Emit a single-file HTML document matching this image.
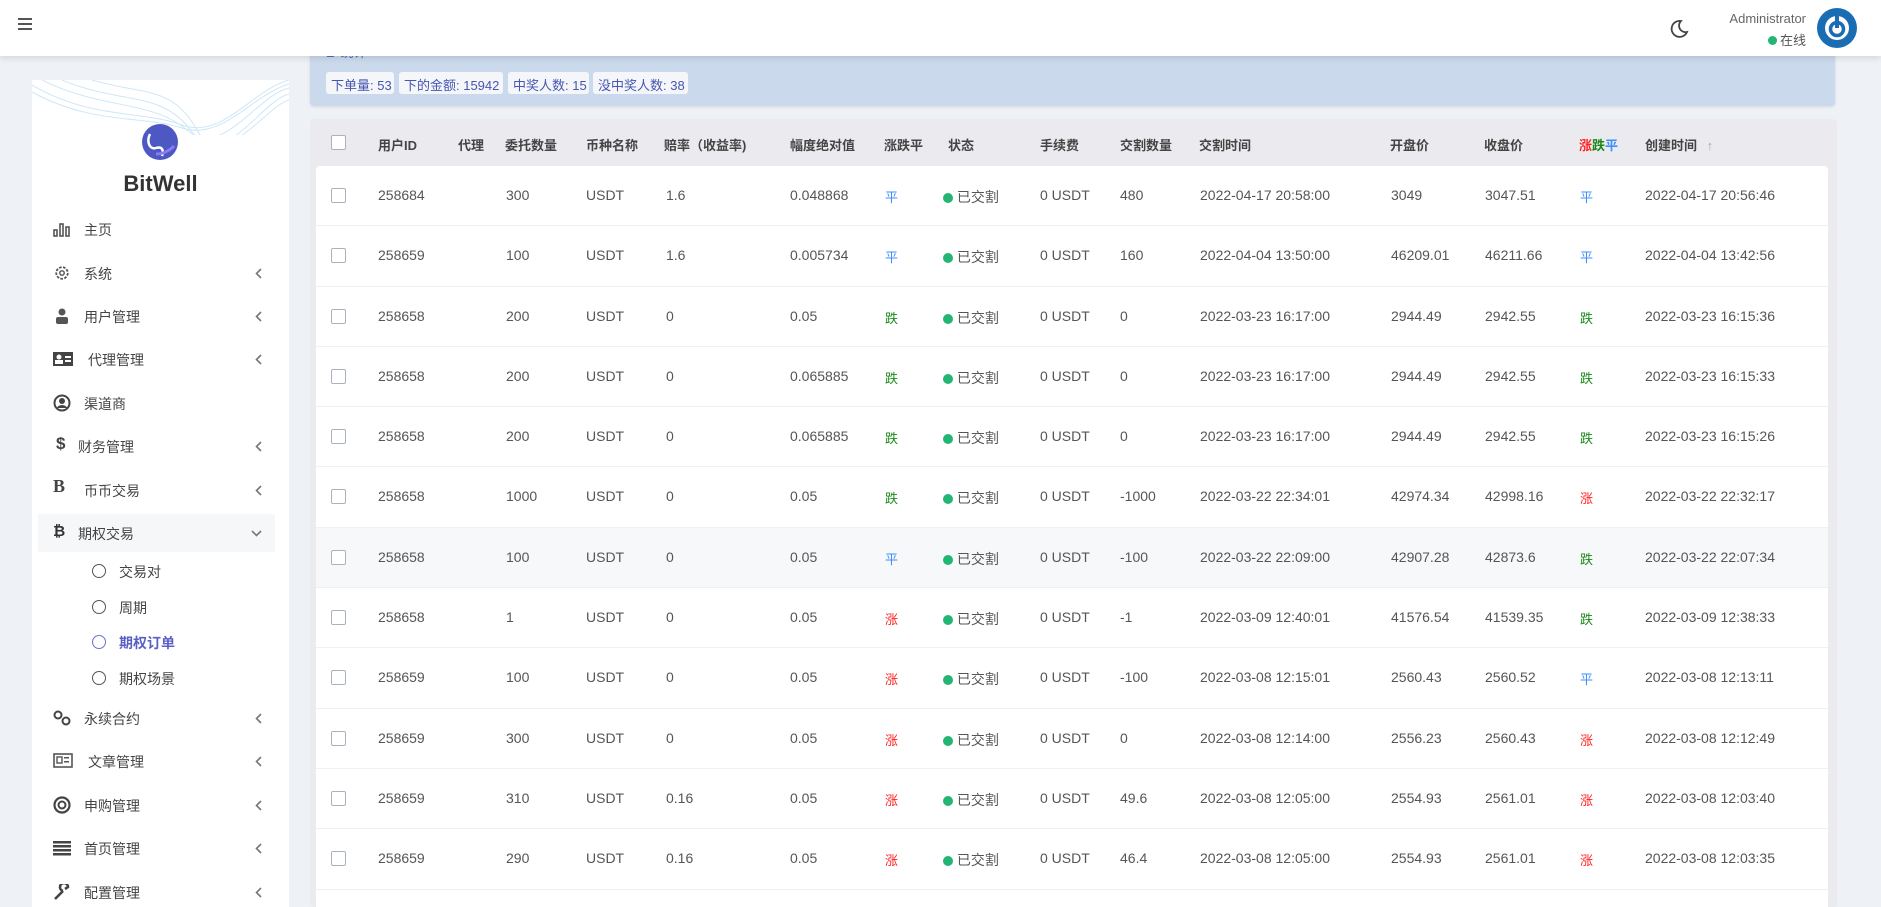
<!DOCTYPE html>
<html style="overflow:hidden;height:907px"><head><meta charset="utf-8">
<style>
*{box-sizing:border-box;margin:0;padding:0}
html,body{overflow:hidden}
body{width:1881px;height:907px;background:#eef1f6;font-family:"Liberation Sans","Noto Sans CJK SC",sans-serif;color:#555;position:relative}
#wrap{position:absolute;left:0;top:0;width:1881px;height:907px;overflow:hidden}
.hdr{position:absolute;left:0;top:0;width:1881px;height:56px;background:#fff;box-shadow:0 2px 6px rgba(0,0,0,.12);z-index:5}
.side{position:absolute;left:32px;top:80px;width:257px;height:827px;background:#fff}
.mi{position:absolute;left:0;width:257px;height:40px;font-size:14px;color:#444}
.mi .ic{position:absolute;left:21px;top:12px;width:18px;height:16px}
.mi .tx{position:absolute;left:52px;top:11px}
.mi .ch{position:absolute;left:223px;top:15px;width:7px;height:11px}
.sub{position:absolute;left:0;width:257px;height:34px;font-size:14px;color:#444}
.sub .c{position:absolute;left:60px;top:10px;width:14px;height:14px;border:1.5px solid #555;border-radius:50%}
.sub .tx{position:absolute;left:87px;top:8px}
.stats{position:absolute;left:310px;top:40px;width:1525px;height:66px;background:#cbd9ec;border-radius:0 0 4px 4px;box-shadow:0 1px 3px rgba(0,0,0,.1)}
.badge{position:absolute;top:32px;height:22px;background:#f4f6fa;border-radius:3px;font-size:13px;color:#4656b0;padding:3px 5px;white-space:nowrap}
.card{position:absolute;left:310px;top:119px;width:1527px;height:788px;background:#ebebef;border-radius:4px;overflow:hidden}
.th{position:absolute;top:0;left:0;height:46px;width:100%;font-size:13px;font-weight:bold;color:#444}
.th span,.row span{position:absolute;top:16px;white-space:nowrap}
.rows{position:absolute;left:6px;top:47px;width:1512px;background:#fff;border-radius:4px}
.row{position:relative;height:60.3px;border-bottom:1px solid #eef0f3;font-size:14px;color:#555}
.row span{top:21px}
.cb{position:absolute;width:15px;height:15px;border:1.5px solid #aab2bd;border-radius:2px;background:#fff}
.dot{display:inline-block;width:10px;height:10px;background:#22b573;border-radius:50%}
.p{color:#3d8eff}.d{color:#1b8a1b}.z{color:#f22}
</style></head><body><div id="wrap">
<div class="hdr">
 <div style="position:absolute;left:18px;top:18px;width:14px;height:2px;background:#555;box-shadow:0 5px 0 #555,0 10px 0 #555"></div>
 <svg style="position:absolute;left:1669px;top:19px" width="20" height="20" viewBox="0 0 20 20"><path d="M12 2A8 8 0 1 0 18 13A6.5 6.5 0 0 1 12 2Z" fill="none" stroke="#444" stroke-width="1.8"/></svg>
 <div style="position:absolute;right:75px;top:11px;font-size:13px;color:#666">Administrator</div>
 <div style="position:absolute;right:75px;top:30px;font-size:13px;color:#555"><span class="dot" style="width:9px;height:9px;margin-right:3px"></span>在线</div>
 <svg style="position:absolute;left:1817px;top:8px" width="40" height="40" viewBox="0 0 40 40"><circle cx="20" cy="20" r="20" fill="#1b6db3"/><circle cx="20" cy="20" r="12" fill="#fff"/><circle cx="20" cy="21" r="6.5" fill="none" stroke="#1b6db3" stroke-width="3.5"/><rect x="18" y="8" width="4" height="12" fill="#1b6db3"/></svg>
</div>

<div class="side">
 <svg style="position:absolute;left:0;top:0" width="257" height="55" viewBox="0 0 257 55"><g fill="none" stroke="#cfe7f8" stroke-width="1"><path d="M0 5C60 40 110 30 150 45S220 10 257 0"/><path d="M10 0C70 30 120 20 155 50S225 15 257 8"/><path d="M30 0C90 25 130 10 160 52S230 20 257 14"/><path d="M60 0C110 15 140 5 165 50S235 25 257 20"/><path d="M0 12C60 45 110 35 150 48S220 15 257 4"/></g></svg>
 <svg style="position:absolute;left:110px;top:44px" width="36" height="36" viewBox="0 0 36 36"><circle cx="18" cy="18" r="18" fill="#4e58c2"/><path d="M8 10C4 18 8 26 14 24C20 22 22 26 20 32" fill="none" stroke="#fff" stroke-width="2.5"/><path d="M14 30C22 30 28 26 32 22" fill="none" stroke="#8b7cf2" stroke-width="3"/></svg>
 <div style="position:absolute;left:0;width:257px;top:91px;text-align:center;font-size:22px;font-weight:bold;color:#333">BitWell</div>

 <div class="mi" style="top:129px"><svg class="ic" viewBox="0 0 18 16"><g fill="none" stroke="#555" stroke-width="1.6"><rect x="1" y="9" width="3" height="6"/><rect x="7" y="3" width="3" height="12"/><rect x="13" y="6" width="3" height="9"/></g></svg><span class="tx">主页</span></div>
 <div class="mi" style="top:173px"><svg class="ic" viewBox="0 0 18 18"><circle cx="9" cy="9" r="6.5" fill="none" stroke="#555" stroke-width="2" stroke-dasharray="3 1.5"/><circle cx="9" cy="9" r="2.5" fill="none" stroke="#555" stroke-width="1.6"/></svg><span class="tx">系统</span><svg class="ch" viewBox="0 0 7 11"><path d="M6 1L1.5 5.5L6 10" fill="none" stroke="#777" stroke-width="1.6"/></svg></div>
 <div class="mi" style="top:216px"><svg class="ic" viewBox="0 0 18 16"><circle cx="9" cy="4" r="3.5" fill="#555"/><rect x="3" y="9" width="12" height="7" rx="2" fill="#555"/></svg><span class="tx" style="left:52px">用户管理</span><svg class="ch" viewBox="0 0 7 11"><path d="M6 1L1.5 5.5L6 10" fill="none" stroke="#777" stroke-width="1.6"/></svg></div>
 <div class="mi" style="top:259px"><svg class="ic" viewBox="0 0 20 16" style="width:20px"><rect x="0" y="1" width="20" height="14" fill="#444"/><circle cx="6" cy="6" r="2.5" fill="#fff"/><rect x="2" y="9" width="8" height="4" fill="#fff"/><rect x="12" y="5" width="6" height="2" fill="#fff"/><rect x="12" y="9" width="6" height="2" fill="#fff"/></svg><span class="tx" style="left:56px">代理管理</span><svg class="ch" viewBox="0 0 7 11"><path d="M6 1L1.5 5.5L6 10" fill="none" stroke="#777" stroke-width="1.6"/></svg></div>
 <div class="mi" style="top:303px"><svg class="ic" viewBox="0 0 18 18" style="height:18px;top:11px"><circle cx="9" cy="9" r="7.5" fill="none" stroke="#444" stroke-width="2"/><circle cx="9" cy="7" r="3" fill="#444"/><path d="M3.5 14C6 10 12 10 14.5 14" fill="#444"/></svg><span class="tx">渠道商</span></div>
 <div class="mi" style="top:346px"><span style="position:absolute;left:24px;top:8px;font-weight:bold;font-size:17px;color:#444">$</span><span class="tx" style="left:46px">财务管理</span><svg class="ch" viewBox="0 0 7 11"><path d="M6 1L1.5 5.5L6 10" fill="none" stroke="#777" stroke-width="1.6"/></svg></div>
 <div class="mi" style="top:390px"><span style="position:absolute;left:21px;top:6px;font-weight:bold;font-size:18px;color:#444;font-family:'Liberation Serif',serif">B</span><span class="tx">币币交易</span><svg class="ch" viewBox="0 0 7 11"><path d="M6 1L1.5 5.5L6 10" fill="none" stroke="#777" stroke-width="1.6"/></svg></div>
 <div class="mi" style="top:434px;left:6px;width:237px;height:38px;background:#f6f7f9"><span style="position:absolute;left:15px;top:9px;font-weight:bold;font-size:15px;color:#333">₿</span><span class="tx" style="left:40px;top:10px">期权交易</span><svg style="position:absolute;left:213px;top:16px" width="11" height="7" viewBox="0 0 11 7"><path d="M1 1L5.5 5.5L10 1" fill="none" stroke="#777" stroke-width="1.6"/></svg></div>
 <div class="sub" style="top:474px"><span class="c"></span><span class="tx">交易对</span></div>
 <div class="sub" style="top:510px"><span class="c"></span><span class="tx">周期</span></div>
 <div class="sub" style="top:545px"><span class="c" style="border-color:#6a70d4"></span><span class="tx" style="color:#5a5fc8;font-weight:bold">期权订单</span></div>
 <div class="sub" style="top:581px"><span class="c"></span><span class="tx">期权场景</span></div>
 <div class="mi" style="top:618px"><svg class="ic" viewBox="0 0 18 16"><circle cx="5" cy="5" r="3.5" fill="none" stroke="#444" stroke-width="2"/><circle cx="13" cy="11" r="3.5" fill="none" stroke="#444" stroke-width="2"/></svg><span class="tx">永续合约</span><svg class="ch" viewBox="0 0 7 11"><path d="M6 1L1.5 5.5L6 10" fill="none" stroke="#777" stroke-width="1.6"/></svg></div>
 <div class="mi" style="top:661px"><svg class="ic" viewBox="0 0 20 16" style="width:20px"><rect x="1" y="1" width="18" height="13" fill="none" stroke="#555" stroke-width="1.6"/><rect x="4" y="4" width="5" height="6" fill="none" stroke="#555" stroke-width="1.4"/><rect x="11" y="4" width="5" height="1.5" fill="#555"/><rect x="11" y="8" width="5" height="1.5" fill="#555"/></svg><span class="tx" style="left:56px">文章管理</span><svg class="ch" viewBox="0 0 7 11"><path d="M6 1L1.5 5.5L6 10" fill="none" stroke="#777" stroke-width="1.6"/></svg></div>
 <div class="mi" style="top:705px"><svg class="ic" viewBox="0 0 18 18" style="height:18px;top:11px"><circle cx="9" cy="9" r="7.5" fill="none" stroke="#444" stroke-width="2.2"/><circle cx="9" cy="9" r="3.5" fill="none" stroke="#444" stroke-width="2"/></svg><span class="tx">申购管理</span><svg class="ch" viewBox="0 0 7 11"><path d="M6 1L1.5 5.5L6 10" fill="none" stroke="#777" stroke-width="1.6"/></svg></div>
 <div class="mi" style="top:748px"><svg class="ic" viewBox="0 0 18 16"><g fill="#444"><rect x="0" y="1" width="18" height="2.5"/><rect x="0" y="5" width="18" height="2.5"/><rect x="0" y="9" width="18" height="2.5"/><rect x="0" y="13" width="18" height="2.5"/></g></svg><span class="tx">首页管理</span><svg class="ch" viewBox="0 0 7 11"><path d="M6 1L1.5 5.5L6 10" fill="none" stroke="#777" stroke-width="1.6"/></svg></div>
 <div class="mi" style="top:792px"><svg class="ic" viewBox="0 0 18 16"><path d="M2 15L10 7M10 7A4 4 0 1 1 15 3L12 5" stroke="#444" stroke-width="2.6" fill="none"/></svg><span class="tx">配置管理</span><svg class="ch" viewBox="0 0 7 11"><path d="M6 1L1.5 5.5L6 10" fill="none" stroke="#777" stroke-width="1.6"/></svg></div>
</div>

<div class="stats">
 <div style="position:absolute;left:14px;top:2px;font-size:13px;color:#4a6fc0">▲ 统计</div>
 <div class="badge" style="left:16px;width:68px">下单量: 53</div>
 <div class="badge" style="left:89px;width:104px">下的金额: 15942</div>
 <div class="badge" style="left:198px;width:81px">中奖人数: 15</div>
 <div class="badge" style="left:283px;width:95px">没中奖人数: 38</div>
</div>

<div class="card">
 <div class="th">
  <div class="cb" style="left:21px;top:16px"></div>
  <span style="left:68px">用户ID</span><span style="left:148px">代理</span><span style="left:195px">委托数量</span><span style="left:276px">币种名称</span><span style="left:354px">赔率（收益率)</span><span style="left:480px">幅度绝对值</span><span style="left:574px">涨跌平</span><span style="left:638px">状态</span><span style="left:730px">手续费</span><span style="left:810px">交割数量</span><span style="left:889px">交割时间</span><span style="left:1080px">开盘价</span><span style="left:1174px">收盘价</span><span style="left:1269px"><span class="z" style="position:static">涨</span><span class="d" style="position:static">跌</span><span class="p" style="position:static">平</span></span><span style="left:1335px">创建时间 <span style="position:static;color:#aaa;font-weight:normal;margin-left:6px">↑</span></span>
 </div>
 <div class="rows" id="rows"></div>
</div>
</div>
<script>
var D=[
["258684","300","1.6","0.048868","p","480","2022-04-17 20:58:00","3049","3047.51","p","2022-04-17 20:56:46"],
["258659","100","1.6","0.005734","p","160","2022-04-04 13:50:00","46209.01","46211.66","p","2022-04-04 13:42:56"],
["258658","200","0","0.05","d","0","2022-03-23 16:17:00","2944.49","2942.55","d","2022-03-23 16:15:36"],
["258658","200","0","0.065885","d","0","2022-03-23 16:17:00","2944.49","2942.55","d","2022-03-23 16:15:33"],
["258658","200","0","0.065885","d","0","2022-03-23 16:17:00","2944.49","2942.55","d","2022-03-23 16:15:26"],
["258658","1000","0","0.05","d","-1000","2022-03-22 22:34:01","42974.34","42998.16","z","2022-03-22 22:32:17"],
["258658","100","0","0.05","p","-100","2022-03-22 22:09:00","42907.28","42873.6","d","2022-03-22 22:07:34"],
["258658","1","0","0.05","z","-1","2022-03-09 12:40:01","41576.54","41539.35","d","2022-03-09 12:38:33"],
["258659","100","0","0.05","z","-100","2022-03-08 12:15:01","2560.43","2560.52","p","2022-03-08 12:13:11"],
["258659","300","0","0.05","z","0","2022-03-08 12:14:00","2556.23","2560.43","z","2022-03-08 12:12:49"],
["258659","310","0.16","0.05","z","49.6","2022-03-08 12:05:00","2554.93","2561.01","z","2022-03-08 12:03:40"],
["258659","290","0.16","0.05","z","46.4","2022-03-08 12:05:00","2554.93","2561.01","z","2022-03-08 12:03:35"],
["258659","280","0.16","0.05","z","44.8","2022-03-08 12:05:00","2554.93","2561.01","z","2022-03-08 12:03:30"]];
var L={p:"平",d:"跌",z:"涨"},h="";
D.forEach(function(r,i){
h+='<div class="row"'+(i==6?' style="background:#f7f8fa"':'')+'><div class="cb" style="left:15px;top:22px"></div>'+
'<span style="left:62px">'+r[0]+'</span><span style="left:190px">'+r[1]+'</span><span style="left:270px">USDT</span><span style="left:350px">'+r[2]+'</span><span style="left:474px">'+r[3]+'</span>'+
'<span class="'+r[4]+'" style="left:569px;font-size:13px">'+L[r[4]]+'</span><span style="left:627px"><span class="dot" style="position:static;vertical-align:-1px"></span> 已交割</span>'+
'<span style="left:724px">0 USDT</span><span style="left:804px">'+r[5]+'</span><span style="left:884px">'+r[6]+'</span><span style="left:1075px">'+r[7]+'</span><span style="left:1169px">'+r[8]+'</span>'+
'<span class="'+r[9]+'" style="left:1264px;font-size:13px">'+L[r[9]]+'</span><span style="left:1329px">'+r[10]+'</span></div>';});
document.getElementById("rows").innerHTML=h;
</script>
</body></html>
